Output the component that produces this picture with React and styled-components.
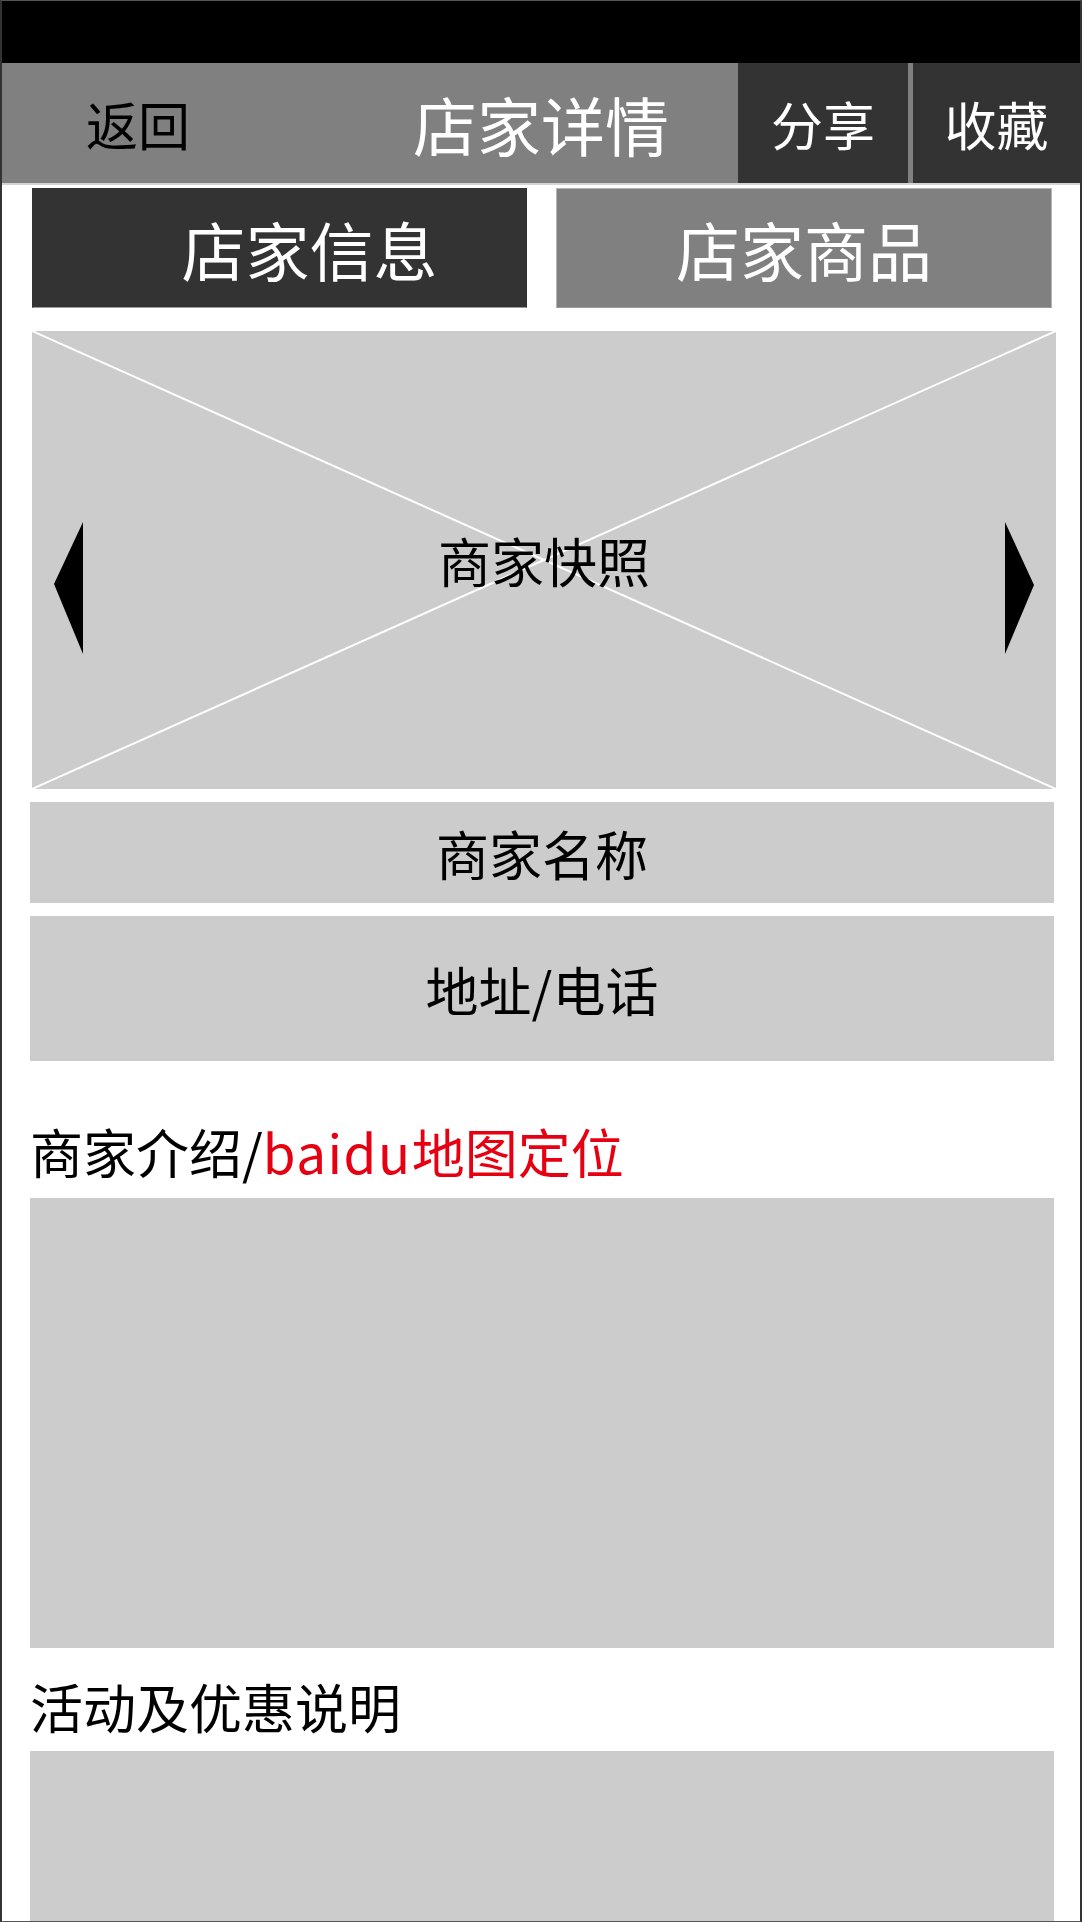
import styled, { createGlobalStyle } from "styled-components";

let GlobalStyle = createGlobalStyle`
  html, body {
    margin: 0;
    padding: 0;
    background: #ffffff;
  }
  body {
    font-family: "Noto Sans CJK SC", "Noto Sans", sans-serif;
  }
`;

let Page = styled.div`
  width: 1082px;
  height: 1922px;
  box-sizing: border-box;
  border: 1px solid #555555;
  border-left: 2px solid #333333;
  border-right: 2px solid #333333;
  display: flex;
  flex-direction: column;
  overflow: hidden;
  background: #ffffff;
`;

let StatusBar = styled.div`
  height: 62px;
  background: #000000;
  flex-shrink: 0;
`;

let Header = styled.div`
  height: 120px;
  flex-shrink: 0;
  display: grid;
  grid-template-columns: 1fr auto 1fr;
  align-items: stretch;
  background: #808080;
  border-bottom: 2px solid #d4d4d4;
`;

let Back = styled.div`
  display: flex;
  align-items: center;
  padding-left: 84px;
  font-size: 52px;
  color: #000000;
`;

let Title = styled.div`
  display: flex;
  align-items: center;
  font-size: 64px;
  color: #ffffff;
`;

let Actions = styled.div`
  justify-self: end;
  display: flex;
  gap: 5px;
`;

let ActionButton = styled.div`
  width: ${p => p.$w}px;
  display: flex;
  align-items: center;
  justify-content: center;
  background: #333333;
  color: #ffffff;
  font-size: 52px;
`;

let Content = styled.div`
  flex: 1;
  display: flex;
  flex-direction: column;
  padding: 0 26px 0 28px;
`;

let Tabs = styled.div`
  display: grid;
  grid-template-columns: 495px 496px;
  gap: 29px;
  margin: 3px 0 0 2px;
`;

let Tab = styled.div`
  height: 120px;
  box-sizing: border-box;
  display: flex;
  align-items: center;
  justify-content: center;
  padding-left: ${p => p.$active ? 60 : 0}px;
  background: ${p => p.$active ? "#333333" : "#808080"};
  border: 1px solid ${p => p.$active ? "#333333" : "#b4b4b4"};
  border-bottom-color: #9a9a9a;
  color: #ffffff;
  font-size: 64px;
`;

let Snapshot = styled.div`
  position: relative;
  height: 458px;
  margin: 23px -2px 0 2px;
  background: #cccccc;
  display: flex;
  align-items: center;
  justify-content: center;
`;

let Cross = styled.svg`
  position: absolute;
  inset: 0;
  width: 100%;
  height: 100%;
`;

let Arrow = styled.svg`
  position: absolute;
  top: 191px;
  ${p => p.$side}: 22px;
  width: 30px;
  height: 132px;
`;

let Label = styled.span`
  position: relative;
  font-size: 53px;
  color: #000000;
`;

let InfoBox = styled.div`
  height: ${p => p.$h}px;
  margin-top: 13px;
  background: #cccccc;
  display: flex;
  align-items: center;
  justify-content: center;
  font-size: 53px;
  color: #000000;
`;

let SectionTitle = styled.div`
  font-size: 53px;
  line-height: 60px;
  color: #000000;
  margin: ${p => p.$top}px 0 ${p => p.$bottom}px;
  span {
    color: #e60012;
  }
  em {
    font-style: normal;
    letter-spacing: 1.5px;
  }
`;

let Panel = styled.div`
  background: #cccccc;
  height: ${p => p.$h ? p.$h + "px" : "auto"};
  flex: ${p => p.$h ? "none" : 1};
`;

export default function App() {
    return <>
        <GlobalStyle/>
        <Page>
            <StatusBar/>
            <Header>
                <Back>返回</Back>
                <Title>店家详情</Title>
                <Actions>
                    <ActionButton $w={170}>分享</ActionButton>
                    <ActionButton $w={167}>收藏</ActionButton>
                </Actions>
            </Header>
            <Content>
                <Tabs>
                    <Tab $active>店家信息</Tab>
                    <Tab>店家商品</Tab>
                </Tabs>
                <Snapshot>
                    <Cross viewBox="0 0 100 100" preserveAspectRatio="none">
                        <line x1="0" y1="0" x2="100" y2="100" stroke="#ffffff" strokeWidth="2" vectorEffect="non-scaling-stroke"/>
                        <line x1="100" y1="0" x2="0" y2="100" stroke="#ffffff" strokeWidth="2" vectorEffect="non-scaling-stroke"/>
                    </Cross>
                    <Arrow $side="left" viewBox="0 0 30 132">
                        <polygon points="29,0 0,62 29,132" fill="#000000"/>
                    </Arrow>
                    <Arrow $side="right" viewBox="0 0 30 132">
                        <polygon points="1,0 30,63 1,132" fill="#000000"/>
                    </Arrow>
                    <Label>商家快照</Label>
                </Snapshot>
                <InfoBox $h={101}>商家名称</InfoBox>
                <InfoBox $h={145}>地址/电话</InfoBox>
                <SectionTitle $top={60} $bottom={17}>商家介绍/<span><em>baidu</em>地图定位</span></SectionTitle>
                <Panel $h={450}/>
                <SectionTitle $top={28} $bottom={15}>活动及优惠说明</SectionTitle>
                <Panel/>
            </Content>
        </Page>
    </>
}
